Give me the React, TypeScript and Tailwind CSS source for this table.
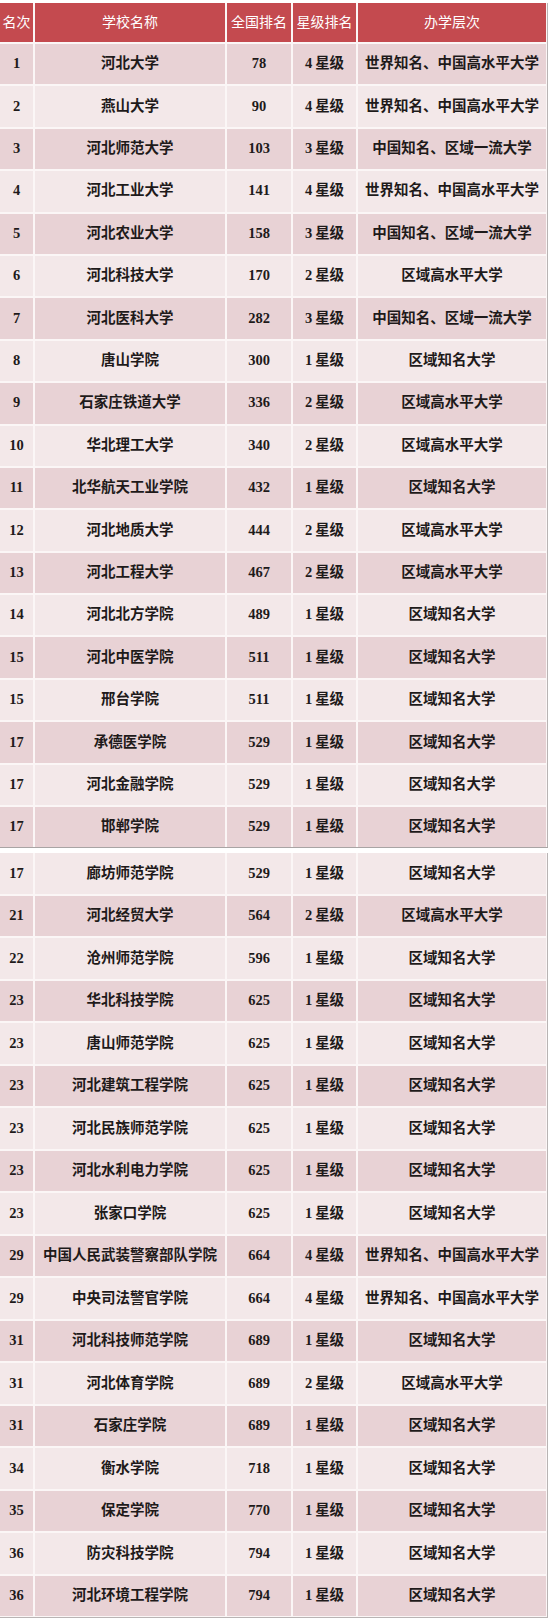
type Row = [string, string, string, string, string]

const top: Row[] = [
  ['1', '河北大学', '78', '4星级', '世界知名、中国高水平大学'],
  ['2', '燕山大学', '90', '4星级', '世界知名、中国高水平大学'],
  ['3', '河北师范大学', '103', '3星级', '中国知名、区域一流大学'],
  ['4', '河北工业大学', '141', '4星级', '世界知名、中国高水平大学'],
  ['5', '河北农业大学', '158', '3星级', '中国知名、区域一流大学'],
  ['6', '河北科技大学', '170', '2星级', '区域高水平大学'],
  ['7', '河北医科大学', '282', '3星级', '中国知名、区域一流大学'],
  ['8', '唐山学院', '300', '1星级', '区域知名大学'],
  ['9', '石家庄铁道大学', '336', '2星级', '区域高水平大学'],
  ['10', '华北理工大学', '340', '2星级', '区域高水平大学'],
  ['11', '北华航天工业学院', '432', '1星级', '区域知名大学'],
  ['12', '河北地质大学', '444', '2星级', '区域高水平大学'],
  ['13', '河北工程大学', '467', '2星级', '区域高水平大学'],
  ['14', '河北北方学院', '489', '1星级', '区域知名大学'],
  ['15', '河北中医学院', '511', '1星级', '区域知名大学'],
  ['15', '邢台学院', '511', '1星级', '区域知名大学'],
  ['17', '承德医学院', '529', '1星级', '区域知名大学'],
  ['17', '河北金融学院', '529', '1星级', '区域知名大学'],
  ['17', '邯郸学院', '529', '1星级', '区域知名大学'],
]

const bottom: Row[] = [
  ['17', '廊坊师范学院', '529', '1星级', '区域知名大学'],
  ['21', '河北经贸大学', '564', '2星级', '区域高水平大学'],
  ['22', '沧州师范学院', '596', '1星级', '区域知名大学'],
  ['23', '华北科技学院', '625', '1星级', '区域知名大学'],
  ['23', '唐山师范学院', '625', '1星级', '区域知名大学'],
  ['23', '河北建筑工程学院', '625', '1星级', '区域知名大学'],
  ['23', '河北民族师范学院', '625', '1星级', '区域知名大学'],
  ['23', '河北水利电力学院', '625', '1星级', '区域知名大学'],
  ['23', '张家口学院', '625', '1星级', '区域知名大学'],
  ['29', '中国人民武装警察部队学院', '664', '4星级', '世界知名、中国高水平大学'],
  ['29', '中央司法警官学院', '664', '4星级', '世界知名、中国高水平大学'],
  ['31', '河北科技师范学院', '689', '1星级', '区域知名大学'],
  ['31', '河北体育学院', '689', '2星级', '区域高水平大学'],
  ['31', '石家庄学院', '689', '1星级', '区域知名大学'],
  ['34', '衡水学院', '718', '1星级', '区域知名大学'],
  ['35', '保定学院', '770', '1星级', '区域知名大学'],
  ['36', '防灾科技学院', '794', '1星级', '区域知名大学'],
  ['36', '河北环境工程学院', '794', '1星级', '区域知名大学'],
]

const grid = 'grid grid-cols-[33px_190px_64px_63px_188px] gap-x-[2px]'

function Star({ s }: { s: string }) {
  // "4星级" -> digit, small space, chars
  return (
    <>
      {s[0]}
      <span className="ml-[3px]">{s.slice(1)}</span>
    </>
  )
}

function Rows({ rows, offset, tall }: { rows: Row[]; offset: number; tall?: boolean }) {
  return (
    <div className="flex flex-col gap-y-[2px]">
      {rows.map((r, i) => {
        const dark = (i + offset) % 2 === 0
        const bg = dark ? 'bg-[#e8d2d5]' : 'bg-[#f3e8e9]'
        return (
          <div key={i} className={`${grid} ${tall ? 'h-[40.5px]' : 'h-[40.4px]'}`}>
            {r.map((c, j) => (
              <div key={j} className={`${bg} flex items-center justify-center whitespace-nowrap`}>
                {j === 3 ? <Star s={c} /> : c}
              </div>
            ))}
          </div>
        )
      })}
    </div>
  )
}

export default function App() {
  return (
    <div
      className="w-[550px] bg-white pt-[3px] text-[14.5px] font-bold text-[#1e1a1a]"
      style={{ fontFamily: '"Liberation Serif", "Noto Sans CJK SC", serif' }}
    >
      <div className="w-[548px] border-r border-[#b9b4b4] bg-[#fbf6f6]">
        <div className="flex flex-col gap-y-[2px] w-[546px]">
          <div className={`${grid} h-[39px]`}>
            {['名次', '学校名称', '全国排名', '星级排名', '办学层次'].map(h => (
              <div key={h} className="bg-[#c44a4f] flex items-center justify-center text-white font-normal whitespace-nowrap text-[14px]">
                {h}
              </div>
            ))}
          </div>
          <Rows rows={top} offset={0} />
        </div>
      </div>

      <div className="h-px bg-[#a9a4a4] w-[548px]" />
      <div className="h-[5px]" />

      <div className="w-[548px] border-r border-b border-[#b9b4b4] bg-[#fbf6f6]">
        <div className="w-[546px] pb-px">
          <Rows rows={bottom} offset={1} tall />
        </div>
      </div>
    </div>
  )
}
